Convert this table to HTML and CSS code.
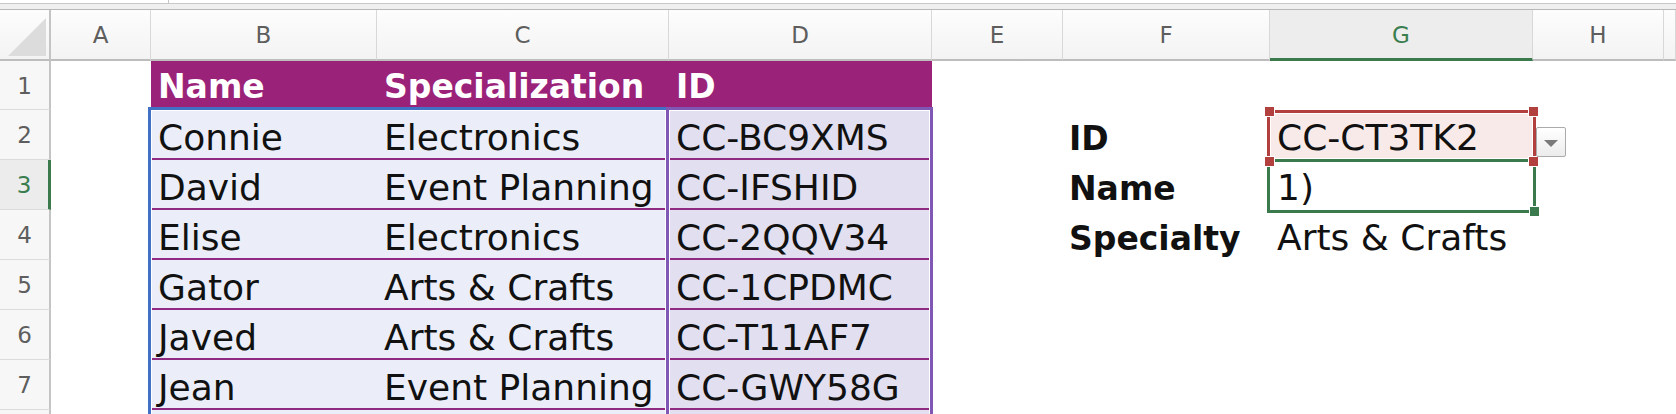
FILE: index.html
```html
<!DOCTYPE html>
<html lang="en">
<head>
<meta charset="utf-8">
<title>Sheet</title>
<link rel="stylesheet" href="styles.css">
</head>
<body>
<div class="sheet">
  <div class="topbar">
    <div class="fbar"><div class="namebox"></div></div>
    <div class="gap"></div>
  </div>
  <div class="grid">
    <div class="corner"><svg class="tri" width="38" height="38" viewBox="0 0 38 38"><polygon points="38,0 38,38 0,38" fill="#dcdcdc"/></svg></div>
    <div class="ch">A</div><div class="ch">B</div><div class="ch">C</div><div class="ch">D</div><div class="ch">E</div><div class="ch">F</div><div class="ch sel">G</div><div class="ch">H</div><div class="ch"></div>

    <div class="rh">1</div><div class="c"></div><div class="c th">Name</div><div class="c th">Specialization</div><div class="c th">ID</div><div class="c"></div><div class="c"></div><div class="c"></div><div class="c"></div><div class="c"></div>

    <div class="rh">2</div><div class="c"></div><div class="c tb">Connie</div><div class="c tb">Electronics</div><div class="c td">CC-BC9XMS</div><div class="c"></div><div class="c lbl">ID</div><div class="c g2">CC-CT3TK2</div><div class="c"></div><div class="c"></div>

    <div class="rh sel">3</div><div class="c"></div><div class="c tb">David</div><div class="c tb">Event Planning</div><div class="c td">CC-IFSHID</div><div class="c"></div><div class="c lbl">Name</div><div class="c">1)</div><div class="c"></div><div class="c"></div>

    <div class="rh">4</div><div class="c"></div><div class="c tb">Elise</div><div class="c tb">Electronics</div><div class="c td">CC-2QQV34</div><div class="c"></div><div class="c lbl">Specialty</div><div class="c">Arts &amp; Crafts</div><div class="c"></div><div class="c"></div>

    <div class="rh">5</div><div class="c"></div><div class="c tb">Gator</div><div class="c tb">Arts &amp; Crafts</div><div class="c td">CC-1CPDMC</div><div class="c"></div><div class="c"></div><div class="c"></div><div class="c"></div><div class="c"></div>

    <div class="rh">6</div><div class="c"></div><div class="c tb">Javed</div><div class="c tb">Arts &amp; Crafts</div><div class="c td">CC-T11AF7</div><div class="c"></div><div class="c"></div><div class="c"></div><div class="c"></div><div class="c"></div>

    <div class="rh">7</div><div class="c"></div><div class="c tb">Jean</div><div class="c tb">Event Planning</div><div class="c td">CC-GWY58G</div><div class="c"></div><div class="c"></div><div class="c"></div><div class="c"></div><div class="c"></div>

    <div class="rh"></div><div class="c"></div><div class="c tb"></div><div class="c tb"></div><div class="c td"></div><div class="c"></div><div class="c"></div><div class="c"></div><div class="c"></div><div class="c"></div>
  </div>

  <div class="rng rng-blue"></div>
  <div class="rng rng-purple"></div>

  <div class="rng rng-red"></div>
  <div class="rng rng-green"></div>
  <div class="hd hd-red hd-tl"></div>
  <div class="hd hd-red hd-tr"></div>
  <div class="hd hd-red hd-bl"></div>
  <div class="hd hd-red hd-br"></div>
  <div class="hd hd-green hd-gbr"></div>

  <div class="dropbtn"><span class="arrow"></span></div>
</div>
</body>
</html>
```

FILE: styles.css
```css
html, body {
  margin: 0;
  padding: 0;
  background: #fff;
  overflow: hidden;
}
body {
  font-family: "DejaVu Sans", "Liberation Sans", sans-serif;
  color: #111;
}
.sheet {
  position: relative;
  width: 1676px;
  height: 414px;
  overflow: hidden;
}
.topbar {
  height: 10px;
  display: flex;
  flex-direction: column;
}
.fbar {
  height: 3px;
  background: #fff;
  border-bottom: 1px solid #c9c9c9;
  display: flex;
}
.namebox {
  width: 168px;
  border-right: 1px solid #c4c4c4;
}
.gap {
  height: 5px;
  background: #efefef;
  border-bottom: 1px solid #b8b8b8;
}
.grid {
  display: grid;
  grid-template-columns: 51px 100px 226px 292px 263px 131px 207px 263px 131px 12px;
  grid-template-rows: 51px 49px repeat(7, 50px);
}
.corner {
  box-sizing: border-box;
  background: linear-gradient(#fdfdfd, #f3f3f3);
  border-right: 2px solid #c4c4c4;
  border-bottom: 2px solid #bdbdbd;
  position: relative;
}
.tri {
  position: absolute;
  left: 8px;
  top: 8px;
}
.ch {
  box-sizing: border-box;
  background: linear-gradient(#fdfdfd, #f3f3f3);
  border-right: 1px solid #d8d8d8;
  border-bottom: 2px solid #bdbdbd;
  display: flex;
  align-items: center;
  justify-content: center;
  font-size: 23px;
  color: #5e5e5e;
}
.ch.sel {
  background: #ededed;
  border-bottom: 3px solid #3b7a4d;
  color: #3a7d4e;
  padding-top: 1px;
}
.rh {
  box-sizing: border-box;
  background: #f7f7f7;
  border-right: 2px solid #c4c4c4;
  border-bottom: 1px solid #dcdcdc;
  text-align: center;
  padding-top: 10px;
  font-size: 23px;
  line-height: 30px;
  color: #5e5e5e;
}
.rh.sel {
  background: #ececec;
  border-right: 3px solid #3b7a4d;
  color: #3a7d4e;
}
.c {
  box-sizing: border-box;
  padding: 10px 0 0 7px;
  font-size: 36px;
  line-height: 36px;
  white-space: nowrap;
}
.th {
  background: #9b2279;
  color: #fff;
  font-weight: bold;
  font-size: 33px;
  padding-top: 8px;
}
.tb {
  background: #ebeef8;
  border-bottom: 2px solid #8f2a82;
}
.td {
  background: #e1dff0;
  border-bottom: 2px solid #8f2a82;
}
.lbl {
  font-weight: bold;
  font-size: 33px;
  padding-left: 6px;
  padding-top: 11px;
}
.g2 {
  background: #f9eaea;
}
.rng {
  position: absolute;
  box-sizing: border-box;
  border: 3px solid;
  box-shadow: inset 0 0 0 1px #fff;
}
.rng-blue {
  left: 148px;
  top: 107px;
  width: 521px;
  height: 400px;
  border-color: #4170c4;
}
.rng-purple {
  left: 666px;
  top: 107px;
  width: 267px;
  height: 400px;
  border-color: #7f58b5;
}
.rng-red {
  left: 1267px;
  top: 110px;
  width: 269px;
  height: 52px;
  border-color: #b2403f;
}
.rng-green {
  left: 1267px;
  top: 159px;
  width: 269px;
  height: 54px;
  border-color: #3b7a4c;
}
.hd {
  position: absolute;
  width: 9px;
  height: 9px;
  border: 1px solid #fff;
}
.hd-red { background: #b2403f; }
.hd-green { background: #3b7a4c; }
.hd-tl { left: 1264px; top: 106px; }
.hd-tr { left: 1528px; top: 106px; }
.hd-bl { left: 1264px; top: 156px; }
.hd-br { left: 1528px; top: 156px; }
.hd-gbr { left: 1529px; top: 206px; }
.dropbtn {
  position: absolute;
  left: 1536px;
  top: 127px;
  width: 30px;
  height: 30px;
  box-sizing: border-box;
  border: 1px solid #aaaaaa;
  border-radius: 2px;
  background: linear-gradient(#ffffff, #ececec);
  display: flex;
  align-items: center;
  justify-content: center;
}
.arrow {
  width: 0;
  height: 0;
  border-left: 7px solid transparent;
  border-right: 7px solid transparent;
  border-top: 7px solid #7a7a7a;
  margin-top: 2px;
}
```
